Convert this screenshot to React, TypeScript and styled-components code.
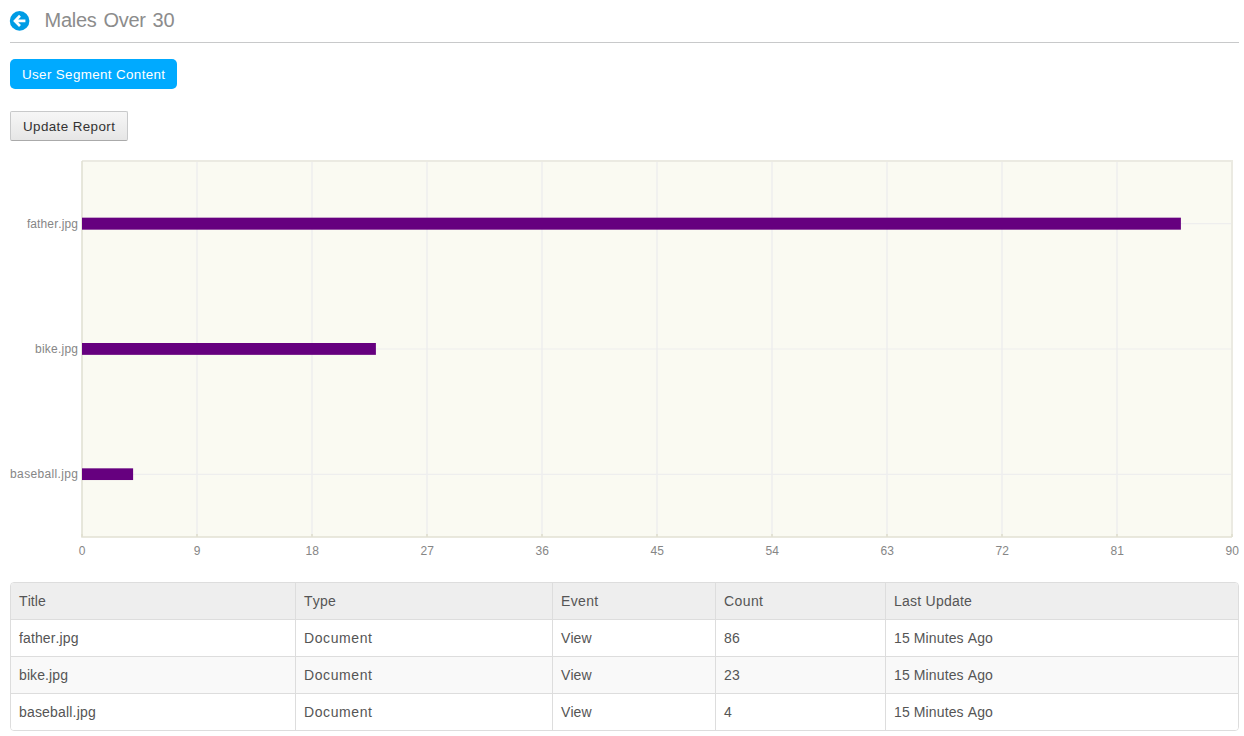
import React from "react";
import styled, { createGlobalStyle } from "styled-components";

const GlobalStyle = createGlobalStyle`
  *, *::before, *::after { box-sizing: border-box; }
  body {
    margin: 0;
    background: #fff;
    color: #555;
    font-family: "Liberation Sans", Arial, sans-serif;
    font-size: 14px;
    font-kerning: none;
  }
`;

const Page = styled.main`
  width: 1244px;
  height: 736px;
  padding: 0 5px 0 10px;
  display: flex;
  flex-direction: column;
  align-items: flex-start;
  overflow: hidden;
`;

const Header = styled.header`
  display: flex;
  align-items: center;
  gap: 14.5px;
  width: 100%;
  height: 43px;
  padding-bottom: 2px;
  border-bottom: 1px solid #c8c9ca;
`;

const BackLink = styled.a`
  display: flex;
  width: 20px;
  height: 20px;
`;

const Heading = styled.h1`
  margin: 0;
  font-size: 20px;
  font-weight: 400;
  line-height: 24px;
  letter-spacing: -0.25px;
  word-spacing: 1.5px;
  color: #8c8c8c;
`;

const SegmentPill = styled.a`
  display: flex;
  align-items: center;
  width: 167px;
  height: 30px;
  margin-top: 16px;
  padding-left: 12px;
  border-radius: 5px;
  background: #00aaff;
  color: #fff;
  font-size: 13.4px;
  letter-spacing: 0.36px;
  white-space: nowrap;
`;

const UpdateButton = styled.button`
  width: 118px;
  height: 30px;
  margin: 22px 0 0;
  padding: 0 0 0 12px;
  border: 1px solid;
  border-color: #c8c9ca #c8c9ca #aaa;
  border-radius: 2px;
  background: linear-gradient(#f6f6f6, #e6e6e6);
  color: #333;
  font: 13.4px "Liberation Sans", Arial, sans-serif;
  font-kerning: none;
  letter-spacing: 0.4px;
  text-align: left;
  white-space: nowrap;
`;

const Chart = styled.svg`
  display: block;
  flex: none;
  width: 1229px;
  height: 420px;
  margin-top: 11px;
  overflow: visible;
`;

const AxisLabel = styled.text<{ $spacing?: number }>`
  font-size: 12px;
  fill: #868686;
  letter-spacing: ${({ $spacing = 0 }) => $spacing}px;
`;

const Table = styled.div`
  width: 1229px;
  height: 149px;
  margin-top: 10px;
  border: 1px solid #ddd;
  border-radius: 4px;
  overflow: hidden;
`;

const Row = styled.div<{ $head?: boolean; $shaded?: boolean }>`
  display: grid;
  grid-template-columns: 285px 257px 163px 170px 352px;
  height: 37px;
  border-bottom: 1px solid #ddd;
  background: ${({ $head, $shaded }) => ($head ? "#eee" : $shaded ? "#f9f9f9" : "#fff")};

  &:last-child {
    height: 36px;
    border-bottom: 0;
  }
`;

const Cell = styled.div<{ $spacing: number }>`
  padding-left: 8px;
  border-right: 1px solid #ddd;
  line-height: 36px;
  letter-spacing: ${({ $spacing }) => $spacing}px;

  &:last-child {
    border-right: 0;
  }
`;

type Text = [string, number];

const HEAD: Text[] = [["Title", 0.1], ["Type", 0.2], ["Event", 0.35], ["Count", 0.4], ["Last Update", 0.24]];

const ITEMS = [
  { title: "father.jpg", count: 86, spacing: 0.12, axis: 0.12 },
  { title: "bike.jpg", count: 23, spacing: 0.1, axis: 0.22 },
  { title: "baseball.jpg", count: 4, spacing: 0.18, axis: 0.35 },
];

const TICKS = Array.from({ length: 11 }, (_, i) => i);

/* Chart coordinates start at the page's left edge and the chart's top. */
const LEFT = 82;
const TOP = 9;
const BOTTOM = 385;
const RIGHT = 1232;
const BAND = (BOTTOM - TOP) / 3;

const BarChart = () => (
  <Chart viewBox="10 0 1229 420">
    <rect x={LEFT} y={TOP} width={RIGHT - LEFT} height={BOTTOM - TOP} fill="#fafaf2" />
    {TICKS.slice(1, 10).map((i) => (
      <path key={i} d={`M${LEFT + i * 115} ${TOP}V${BOTTOM}`} stroke="#eee" strokeOpacity={0.75} strokeWidth={2} />
    ))}
    {ITEMS.map((item, i) => {
      const y = TOP + BAND * (i + 0.5);
      return (
        <g key={item.title}>
          <path d={`M${LEFT} ${y}H${RIGHT}`} stroke="#eee" strokeWidth={1.2} />
          <AxisLabel x={78 + item.axis} y={Math.round(y - 0.1) + 4} textAnchor="end" $spacing={item.axis}>
            {item.title}
          </AxisLabel>
        </g>
      );
    })}
    <path d={`M${LEFT} ${TOP}H${RIGHT}V${BOTTOM}`} fill="none" stroke="#ebeae2" strokeWidth={2} />
    <path d={`M${LEFT} ${TOP}V${BOTTOM}H${RIGHT}`} fill="none" stroke="#e2e1d4" strokeWidth={1.6} />
    {TICKS.map((i) => (
      <g key={i}>
        <path d={`M${LEFT + i * 115} ${BOTTOM - 3}v3`} stroke="#e1e0d2" strokeWidth={1.8} />
        <AxisLabel x={LEFT + i * 115 + 0.2} y={403} textAnchor="middle">
          {i * 9}
        </AxisLabel>
      </g>
    ))}
    {ITEMS.map((item, i) => (
      <rect
        key={item.title}
        x={LEFT}
        y={TOP + BAND * (i + 0.5) - 6}
        width={(item.count / 90) * (RIGHT - LEFT)}
        height={12 - i * 0.15}
        fill="#66007f"
      />
    ))}
  </Chart>
);

const App = () => (
  <>
    <GlobalStyle />
    <Page>
      <Header>
        <BackLink aria-label="Back">
          <svg width="20" height="20" viewBox="0 0 20 20" overflow="visible">
            <circle cx="9.6" cy="10.9" r="9.8" fill="#009ce5" />
            <path d="M10 5.8 5 10.9 10 16M5.4 10.9H15.4" fill="none" stroke="#fff" strokeWidth="2.7" />
          </svg>
        </BackLink>
        <Heading>Males Over 30</Heading>
      </Header>
      <SegmentPill>User Segment Content</SegmentPill>
      <UpdateButton>Update Report</UpdateButton>
      <BarChart />
      <Table>
        <Row $head>
          {HEAD.map(([label, spacing]) => (
            <Cell key={label} $spacing={spacing}>
              {label}
            </Cell>
          ))}
        </Row>
        {ITEMS.map((item, i) => (
          <Row key={item.title} $shaded={i === 1}>
            <Cell $spacing={item.spacing}>{item.title}</Cell>
            <Cell $spacing={0.6}>Document</Cell>
            <Cell $spacing={0.05}>View</Cell>
            <Cell $spacing={0.1}>{item.count}</Cell>
            <Cell $spacing={0.12}>15 Minutes Ago</Cell>
          </Row>
        ))}
      </Table>
    </Page>
  </>
);

export default App;
